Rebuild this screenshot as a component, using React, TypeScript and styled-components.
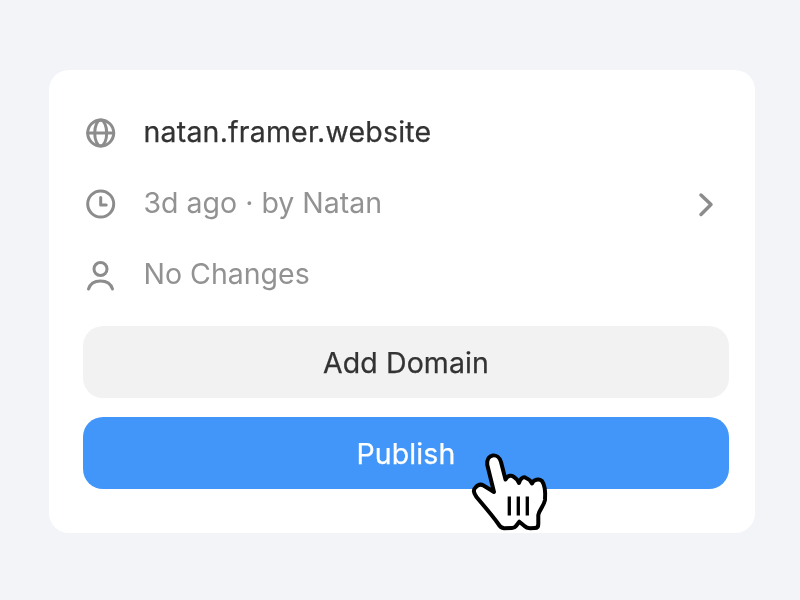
import React from "react";
import styled, { createGlobalStyle } from "styled-components";

const GlobalStyle = createGlobalStyle`
  html, body {
    margin: 0;
    padding: 0;
    background: #f2f4f8;
    font-family: Inter, "Liberation Sans", sans-serif;
  }
`;

const Page = styled.div`
  width: 800px;
  height: 600px;
  padding: 70px 45px 67px 49px;
  box-sizing: border-box;
`;

const Card = styled.div`
  position: relative;
  height: 463px;
  padding: 27px 26px 44px 34px;
  box-sizing: border-box;
  background: #ffffff;
  border-radius: 20px;
  display: flex;
  flex-direction: column;
  will-change: transform;
`;

const Rows = styled.div`
  display: flex;
  flex-direction: column;
  margin-bottom: 16px;
`;

const Row = styled.div`
  height: 71px;
  display: flex;
  align-items: center;
  gap: 25.5px;
  padding-left: 1px;
  padding-right: 5px;
`;

const RowIcon = styled.svg`
  width: 34px;
  height: 34px;
  flex: none;
  fill: none;
  stroke: #8c8c8c;
  stroke-width: 3;
  stroke-linecap: round;
  stroke-linejoin: round;
`;

const RowText = styled.span<{ $muted?: boolean }>`
  flex: 1;
  font-size: 28.5px;
  line-height: 34px;
  margin-top: -1px;
  font-weight: 400;
  letter-spacing: ${({ $muted }) => ($muted ? "0" : "0.2px")};
  color: ${({ $muted }) => ($muted ? "#929292" : "#333333")};
  -webkit-text-stroke: ${({ $muted }) => ($muted ? "0" : "0.25px")};
`;

const Buttons = styled.div`
  display: flex;
  flex-direction: column;
  gap: 19px;
`;

const Button = styled.div<{ $primary?: boolean }>`
  height: 72px;
  border-radius: 20px;
  display: flex;
  align-items: center;
  justify-content: center;
  font-size: 28.5px;
  letter-spacing: 0.1px;
  font-weight: 400;
  -webkit-text-stroke: 0.25px;
  background: ${({ $primary }) => ($primary ? "#4296fa" : "#f2f2f2")};
  color: ${({ $primary }) => ($primary ? "#ffffff" : "#333333")};
`;

const Cursor = styled.svg`
  position: absolute;
  left: 411px;
  top: 370px;
  width: 100px;
  height: 100px;
`;

const App = () => {
  return (
    <Page>
      <GlobalStyle />
      <Card>
        <Rows>
          <Row>
            <RowIcon viewBox="0 0 34 34">
              <circle cx="16.7" cy="17" r="13" />
              <ellipse cx="16.7" cy="17" rx="6" ry="13" />
              <path d="M3.700 17h26" />
            </RowIcon>
            <RowText>natan.framer.website</RowText>
          </Row>
          <Row>
            <RowIcon viewBox="0 0 34 34">
              <circle cx="16.7" cy="17" r="13" />
              <path d="M16.700 10.500v7.500h5.500" />
            </RowIcon>
            <RowText $muted>3d ago · by Natan</RowText>
            <RowIcon viewBox="0 0 34 34">
              <path d="M11 8l10 9.500-10 10" strokeWidth="3.5" />
            </RowIcon>
          </Row>
          <Row>
            <RowIcon viewBox="0 0 34 34">
              <circle cx="16.5" cy="11" r="6.500" />
              <path d="M4.500 31c1.500-5 6-8 12-8s10.500 3 12 8" />
            </RowIcon>
            <RowText $muted>No Changes</RowText>
          </Row>
        </Rows>
        <Buttons>
          <Button>Add Domain</Button>
          <Button $primary>Publish</Button>
        </Buttons>
        <Cursor viewBox="0 0 100 100">
          <path
            d="M27.300 25C26 13 38.500 12.500 41 22L45.500 39.500C48 35 52 35 54 37C56.500 38.500 58 40.500 59 43C60.500 37.500 64 36.500 66 38C68.500 39 71 41 72 43.500C73.500 39.500 79 38.500 82 41C85 45 85.500 53 85 60C84 66 79 70 78.300 75L78.300 84Q78.300 88 75 88L70 88.300Q66.500 88 64.500 86L59.300 81.700L56 86Q54.500 88 52 88L44 88.300Q40.500 88 38 83.500C32 75 24 66 16.500 57C13 52 13.500 49 15.500 47.500C18 44.500 21 44 23.500 45.500L34 52Z"
            fill="#ffffff"
            stroke="#000000"
            strokeWidth="4"
            strokeLinejoin="round"
          />
          <path
            d="M49.300 56.500V75.500M58.300 56.500V75.500M67.300 56.500V75.500"
            fill="none"
            stroke="#000000"
            strokeWidth="3.3"
          />
        </Cursor>
      </Card>
    </Page>
  );
};

export default App;
